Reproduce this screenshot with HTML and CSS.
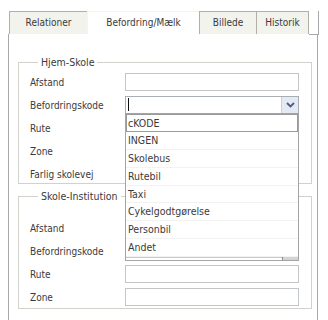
FILE: index.html
```html
<!DOCTYPE html>
<html lang="da">
<head>
  <meta charset="UTF-8">
  <title>Befordring/Mælk</title>
  <link rel="stylesheet" href="styles.css">
</head>
<body>
  <div class="tabs">
    <div class="tab">Relationer</div>
    <div class="tab tab-active">Befordring/Mælk</div>
    <div class="tab">Billede</div>
    <div class="tab">Historik</div>
    <div class="tab-fill"></div>
  </div>

  <div class="panel">
    <!-- Hjem-Skole -->
    <fieldset class="group group-home">
      <legend>Hjem-Skole</legend>
      <div class="row">
        <label>Afstand</label>
        <div class="field"></div>
      </div>
      <div class="row">
        <label>Befordringskode</label>
        <div class="combo">
          <div class="combo-text"><span class="caret"></span></div>
          <div class="combo-btn">
            <svg width="9" height="6" viewBox="0 0 9 6"><path d="M1 1 L4.5 4.5 L8 1" fill="none" stroke="#4a5d80" stroke-width="1.8"/></svg>
          </div>
          <ul class="dropdown">
            <li class="selected">cKODE</li>
            <li>INGEN</li>
            <li>Skolebus</li>
            <li>Rutebil</li>
            <li>Taxi</li>
            <li>Cykelgodtgørelse</li>
            <li>Personbil</li>
            <li>Andet</li>
            <li class="scroll"><span class="thumb"></span></li>
          </ul>
        </div>
      </div>
      <div class="row">
        <label>Rute</label>
        <div class="field"></div>
      </div>
      <div class="row">
        <label>Zone</label>
        <div class="field"></div>
      </div>
      <div class="row">
        <label>Farlig skolevej</label>
        <div class="field"></div>
      </div>
    </fieldset>

    <!-- Skole-Institution -->
    <fieldset class="group group-school">
      <legend>Skole-Institution</legend>
      <div class="row">
        <label>Afstand</label>
        <div class="field"></div>
      </div>
      <div class="row">
        <label>Befordringskode</label>
        <div class="field"></div>
      </div>
      <div class="row">
        <label>Rute</label>
        <div class="field"></div>
      </div>
      <div class="row">
        <label>Zone</label>
        <div class="field"></div>
      </div>
    </fieldset>
  </div>
</body>
</html>
```

FILE: styles.css
```css
* {
  margin: 0;
  padding: 0;
  box-sizing: border-box;
}

body {
  font-family: "DejaVu Sans Condensed", "Liberation Sans", sans-serif;
  font-size: 10px;
  color: #3a3a3a;
  background-color: #ffffff;
  width: 328px;
  height: 320px;
  overflow: hidden;
}

.tabs {
  display: flex;
  margin-top: 11px;
  padding-left: 9px;
  height: 23px;
}

.tab {
  height: 23px;
  line-height: 22px;
  text-align: center;
  background-color: #f3f3ee;
  border: 1px solid #b0b0a8;
  border-bottom: none;
  margin-right: -1px;
}

.tab:nth-child(1) { width: 79px; }
.tab:nth-child(2) { width: 113px; }
.tab:nth-child(3) { width: 58px; }
.tab:nth-child(4) { width: 53px; }

.tab-active {
  background-color: #ffffff;
  border-color: #f4f4f4;
}

.tab-fill {
  flex: 0 0 10px;
  margin-left: 1px;
  border-bottom: 1px solid #a8a8a8;
  border-right: 1px solid #a8a8a8;
  height: 24px;
}

.panel {
  position: relative;
  margin-left: 8px;
  width: 310px;
  height: 300px;
  border-left: 1px solid #a8a8a8;
  border-right: 1px solid #a8a8a8;
  padding: 22px 6px 0 9px;
}

.group {
  border: 1px solid #d2d2cc;
  padding: 5px 11px 0 11px;
  width: 294px;
}

.group legend {
  margin-left: 8px;
  padding: 0 3px;
  line-height: 12px;
  font-size: 10.5px;
}

.group-school {
  margin-top: 6px;
  padding-top: 17px;
  padding-bottom: 2px;
}

.row {
  display: flex;
  align-items: center;
  height: 18px;
  margin-bottom: 5px;
}

.row:last-child {
  margin-bottom: 0;
}

.row label {
  width: 95px;
}

.field {
  width: 174px;
  height: 18px;
  border: 1px solid #c3c6c9;
  background-color: #ffffff;
}

.combo {
  position: relative;
  display: flex;
  width: 174px;
  height: 18px;
  border: 1px solid #a9aeb5;
  background-color: #ffffff;
}

.combo-text {
  flex: 1;
  padding: 1px 2px;
}

.caret {
  display: block;
  width: 1px;
  height: 13px;
  background-color: #111;
}

.combo-btn {
  width: 17px;
  height: 16px;
  background-color: #e4eaf3;
  border-left: 1px solid #c8d0dc;
  display: flex;
  align-items: center;
  justify-content: center;
}

.dropdown {
  position: absolute;
  top: 16px;
  left: -1px;
  width: 174px;
  list-style: none;
  background-color: #ffffff;
  border: 1px solid #a4a4a4;
  z-index: 2;
}

.dropdown li {
  height: 17.9px;
  line-height: 17px;
  padding-left: 2px;
  border-bottom: 1px solid #f2f2f2;
  font-size: 10.5px;
}

.dropdown li.selected {
  border: 1px solid #9a9a9a;
  padding-left: 1px;
}

.dropdown li.scroll {
  position: relative;
  height: 3px;
  border-bottom: none;
  border-top: 1px solid #c8c8c8;
}

.thumb {
  position: absolute;
  right: 0;
  top: -1px;
  width: 16px;
  height: 3px;
  background-color: #d4d4d4;
  border-left: 1px solid #8a8a8a;
}
```
